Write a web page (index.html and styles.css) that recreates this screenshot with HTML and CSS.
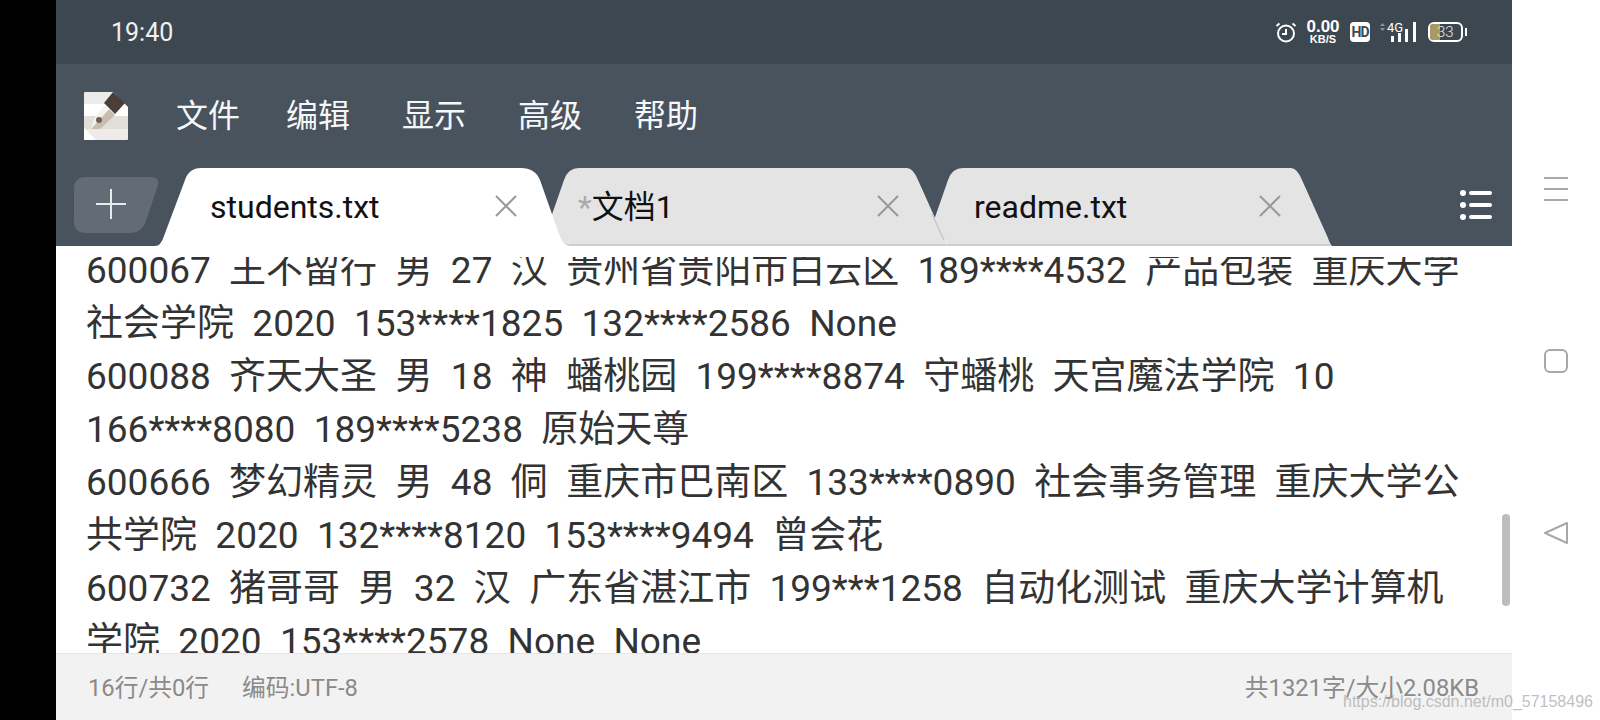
FILE: index.html
```html
<!DOCTYPE html>
<html lang="zh-CN">
<head>
    <meta charset="UTF-8">
    <meta name="viewport" content="width=device-width, initial-scale=1.0">
    <title>students.txt</title>
    <link rel="stylesheet" href="styles.css">
</head>
<body>
    <div class="left-edge"></div>

    <div class="app">
        <!-- Phone status bar -->
        <div class="status-bar">
            <span class="clock">19:40</span>
            <div class="status-icons">
                <svg class="icon-alarm" width="22" height="22" viewBox="0 0 22 22" fill="none" stroke="#fff" stroke-width="2">
                    <circle cx="11" cy="12.500" r="8"/>
                    <path d="M11 8v5h-4"/>
                    <path d="M1.500 5l3-2.500M20.500 5l-3-2.500"/>
                </svg>
                <div class="speed">
                    <span class="speed-num">0.00</span>
                    <span class="speed-unit">KB/S</span>
                </div>
                <span class="hd">HD</span>
                <svg class="icon-signal" width="40" height="22" viewBox="0 0 40 22" fill="#fff">
                    <path d="M1 5l2.500-3 2.500 3zM1 7l2.500 3 2.500-3z" fill="#8b939b"/>
                    <text x="8" y="11" class="signal-text">4G</text>
                    <rect x="12" y="15" width="3" height="6"/>
                    <rect x="19" y="12" width="3" height="9"/>
                    <rect x="26" y="8" width="3" height="13"/>
                    <rect x="34" y="1" width="3" height="20"/>
                </svg>
                <div class="battery">
                    <div class="battery-fill"></div>
                    <span class="battery-num">33</span>
                </div>
            </div>
        </div>

        <!-- Menu bar -->
        <div class="menu-bar">
            <svg class="logo" width="44" height="48" viewBox="0 0 44 48">
                <rect x="0" y="0" width="44" height="48" rx="1" fill="#eeecea"/>
                <rect x="0" y="12" width="44" height="12" fill="#fff"/>
                <rect x="0" y="24" width="44" height="13" fill="#e2ded8"/>
                <path d="M0 36L12 48H1a1 1 0 0 1-1-1z" fill="#fff"/>
                <path d="M29 0H44V15Z" fill="#48535e"/>
                <path d="M7 37L25 17l6 6-15 14z" fill="#c9bcae"/>
                <path d="M7 37L25 17l-4-4L10 27z" fill="#f4f2ef"/>
                <path d="M20 11L29 0l12 11-10 11z" fill="#4b3d38"/>
                <circle cx="15" cy="28" r="3" fill="#6e5f56"/>
            </svg>
            <nav class="menu">
                <span>文件</span>
                <span>编辑</span>
                <span>显示</span>
                <span>高级</span>
                <span>帮助</span>
            </nav>
        </div>

        <!-- Tabs -->
        <div class="tab-bar">
            <div class="new-tab">
                <svg width="85" height="56" viewBox="0 0 85 56">
                    <path d="M12 0H76Q86 0 84 8L72 44Q68 56 56 56H12Q0 56 0 44V12Q0 0 12 0Z" fill="#636c76"/>
                    <path d="M37 12V42M22 27H52" stroke="#e8eaec" stroke-width="2"/>
                </svg>
            </div>

            <div class="tab tab-active">
                <svg class="tab-shape" width="415" height="78" viewBox="0 0 415 78">
                    <path d="M0 78Q6 78 9 68L30 12Q34 0 46 0H366Q380 0 385 12L404 66Q408 78 415 78Z" fill="#fff"/>
                </svg>
                <span class="tab-name">students.txt</span>
                <svg class="tab-close" width="22" height="22" viewBox="0 0 22 22"><path d="M1 1L21 21M21 1L1 21" stroke="#999" stroke-width="2"/></svg>
            </div>

            <div class="tab tab-second">
                <svg class="tab-shape" width="407" height="78" viewBox="0 0 407 78">
                    <path d="M0 78L23 12Q27 0 38 0H366Q372 0 377 12L403 70Q405 76 407 78Z" fill="#e4e4e4"/>
                    <path d="M4 77H405M391 46L403 72" fill="none" stroke="#c6c6c6" stroke-width="1.500"/>
                </svg>
                <span class="tab-name"><span class="dirty">*</span>文档1</span>
                <svg class="tab-close" width="22" height="22" viewBox="0 0 22 22"><path d="M1 1L21 21M21 1L1 21" stroke="#999" stroke-width="2"/></svg>
            </div>

            <div class="tab tab-third">
                <svg class="tab-shape" width="407" height="78" viewBox="0 0 407 78">
                    <path d="M0 78L23 12Q27 0 38 0H366Q372 0 377 12L403 70Q405 76 407 78Z" fill="#e4e4e4"/>
                    <path d="M4 77H405" stroke="#c6c6c6" stroke-width="1.500"/>
                </svg>
                <span class="tab-name">readme.txt</span>
                <svg class="tab-close" width="22" height="22" viewBox="0 0 22 22"><path d="M1 1L21 21M21 1L1 21" stroke="#999" stroke-width="2"/></svg>
            </div>

            <svg class="tab-list" width="32" height="30" viewBox="0 0 32 30" fill="#fff">
                <circle cx="3" cy="3" r="3"/>
                <circle cx="3" cy="15" r="3"/>
                <circle cx="3" cy="27" r="3"/>
                <rect x="9" y="1" width="23" height="4" rx="2"/>
                <rect x="9" y="13" width="23" height="4" rx="2"/>
                <rect x="9" y="25" width="23" height="4" rx="2"/>
            </svg>
        </div>

        <!-- Editor text -->
        <div class="editor">
            <div class="editor-text">
                <div class="record">600067  王不留行  男  27  汉  贵州省贵阳市白云区  189****4532  产品包装  重庆大学社会学院  2020  153****1825  132****2586  None</div>
                <div class="record">600088  齐天大圣  男  18  神  蟠桃园  199****8874  守蟠桃  天宫魔法学院  10  166****8080  189****5238  原始天尊</div>
                <div class="record">600666  梦幻精灵  男  48  侗  重庆市巴南区  133****0890  社会事务管理  重庆大学公共学院  2020  132****8120  153****9494  曾会花</div>
                <div class="record">600732  猪哥哥  男  32  汉  广东省湛江市  199***1258  自动化测试  重庆大学计算机学院  2020  153****2578  None  None</div>
            </div>
            <div class="scroll-thumb"></div>
        </div>

        <!-- Bottom info bar -->
        <div class="info-bar">
            <div class="info-left">
                <span>16行/共0行</span>
                <span>编码:UTF-8</span>
            </div>
            <span>共1321字/大小2.08KB</span>
        </div>
    </div>

    <!-- Phone navigation buttons -->
    <div class="nav-side">
        <svg width="26" height="26" viewBox="0 0 26 26" fill="none" stroke="#a8a8a8" stroke-width="2"><path d="M1 2H25M1 13H25M1 24H25"/></svg>
        <svg width="26" height="26" viewBox="0 0 26 26" fill="none" stroke="#a8a8a8" stroke-width="2"><rect x="2" y="2" width="22" height="22" rx="5"/></svg>
        <svg width="26" height="26" viewBox="0 0 26 26" fill="none" stroke="#a8a8a8" stroke-width="2" stroke-linejoin="round"><path d="M24 3V23L2 13Z"/></svg>
    </div>

    <span class="watermark">https://blog.csdn.net/m0_57158496</span>
</body>
</html>
```

FILE: styles.css
```css
body {
    margin: 0;
    width: 1600px;
    height: 720px;
    display: flex;
    overflow: hidden;
    background-color: #fff;
    font-family: Roboto, "Noto Sans CJK SC", sans-serif;
}

.left-edge {
    width: 56px;
    background-color: #000;
}

.app {
    width: 1456px;
    display: flex;
    flex-direction: column;
}

.status-bar {
    height: 64px;
    background-color: #3d4750;
    display: flex;
    align-items: center;
    justify-content: space-between;
    padding: 0 46px 0 55px;
}

.clock {
    font-size: 25px;
    color: #eef0f2;
}

.status-icons {
    display: flex;
    align-items: center;
}

.icon-alarm {
    margin-right: 8px;
}

.speed {
    width: 36px;
    display: flex;
    flex-direction: column;
    align-items: center;
    color: #fff;
    font-family: "Liberation Sans", sans-serif;
    font-weight: bold;
    margin-right: 9px;
}

.speed-num {
    font-size: 17px;
    line-height: 14px;
}

.speed-unit {
    font-size: 11px;
    line-height: 11px;
}

.hd {
    width: 20px;
    height: 20px;
    border-radius: 4px;
    background-color: #fff;
    color: #3d4750;
    font-size: 14px;
    font-weight: bold;
    letter-spacing: -1px;
    line-height: 20px;
    text-align: center;
    margin-right: 9px;
}

.signal-text {
    font-size: 13px;
    font-family: Roboto, sans-serif;
    fill: #fff;
}

.battery {
    position: relative;
    width: 35px;
    height: 20px;
    border: 2px solid #fff;
    border-radius: 6px;
    box-sizing: border-box;
    margin-left: 9px;
    margin-right: 3px;
}

.battery::after {
    content: "";
    position: absolute;
    right: -6px;
    top: 4px;
    width: 2px;
    height: 8px;
    background-color: #fff;
}

.battery-fill {
    width: 10px;
    height: 100%;
    background-color: #a89a62;
    border-radius: 3px 0 0 3px;
}

.battery-num {
    position: absolute;
    left: 7px;
    top: 0;
    font-size: 15px;
    font-weight: 300;
    line-height: 16px;
    color: #eee;
}

.menu-bar {
    height: 104px;
    background-color: #48535e;
    display: flex;
    align-items: center;
    padding-left: 28px;
    box-sizing: border-box;
}

.menu {
    display: flex;
    gap: 52px;
    margin: -6px 0 0 48px;
    font-size: 32px;
    color: #f6f7f8;
    font-family: "Noto Sans CJK SC", sans-serif;
}

.menu span:first-child {
    margin-right: -6px;
}

.tab-bar {
    height: 78px;
    background-color: #48535e;
    display: flex;
    position: relative;
}

.new-tab {
    margin: 9px 0 0 18px;
    width: 81px;
}

.tab {
    position: relative;
    height: 78px;
    font-size: 32px;
    color: #111;
}

.tab-shape {
    position: absolute;
    left: 0;
    top: 0;
}

.tab-active {
    width: 414px;
    z-index: 3;
}

.tab-second {
    width: 407px;
    margin-left: -28px;
    z-index: 2;
}

.tab-third {
    width: 407px;
    margin-left: -23px;
    z-index: 1;
}

.tab-name {
    position: absolute;
    left: 55px;
    top: 19px;
    line-height: 40px;
}

.tab-second .tab-name {
    left: 37px;
}

.tab-third .tab-name {
    left: 49px;
}

.dirty {
    color: #aaa;
}

.tab-close {
    position: absolute;
    top: 27px;
    left: 340px;
}

.tab-second .tab-close {
    left: 336px;
}

.tab-third .tab-close {
    left: 334px;
}

.tab-list {
    position: absolute;
    left: 1404px;
    top: 22px;
}

.editor {
    flex: 1;
    min-height: 0;
    position: relative;
    margin-top: 11px;
    overflow: hidden;
}

.editor-text {
    margin: -13px 42px 0 30px;
    font-size: 37px;
    line-height: 53px;
    color: #333;
}

.record {
    white-space: pre-wrap;
}

.scroll-thumb {
    position: absolute;
    right: 2px;
    top: 257px;
    width: 8px;
    height: 92px;
    border-radius: 4px;
    background-color: #bdbdbd;
}

.info-bar {
    height: 67px;
    box-sizing: border-box;
    border-top: 1px solid #e6e6e6;
    background-color: #f2f2f2;
    color: #8a8a8a;
    font-size: 23.750px;
    display: flex;
    align-items: center;
    justify-content: space-between;
    padding: 0 33px 4px 32px;
}

.info-left {
    display: flex;
    gap: 33px;
}

.nav-side {
    flex: 1;
    display: flex;
    flex-direction: column;
    align-items: center;
    padding-top: 176px;
    gap: 146px;
}

.watermark {
    position: absolute;
    left: 1343px;
    top: 690px;
    font-family: "Liberation Sans", sans-serif;
    font-size: 16px;
    line-height: 24px;
    color: rgba(170, 170, 170, 0.75);
}
```
